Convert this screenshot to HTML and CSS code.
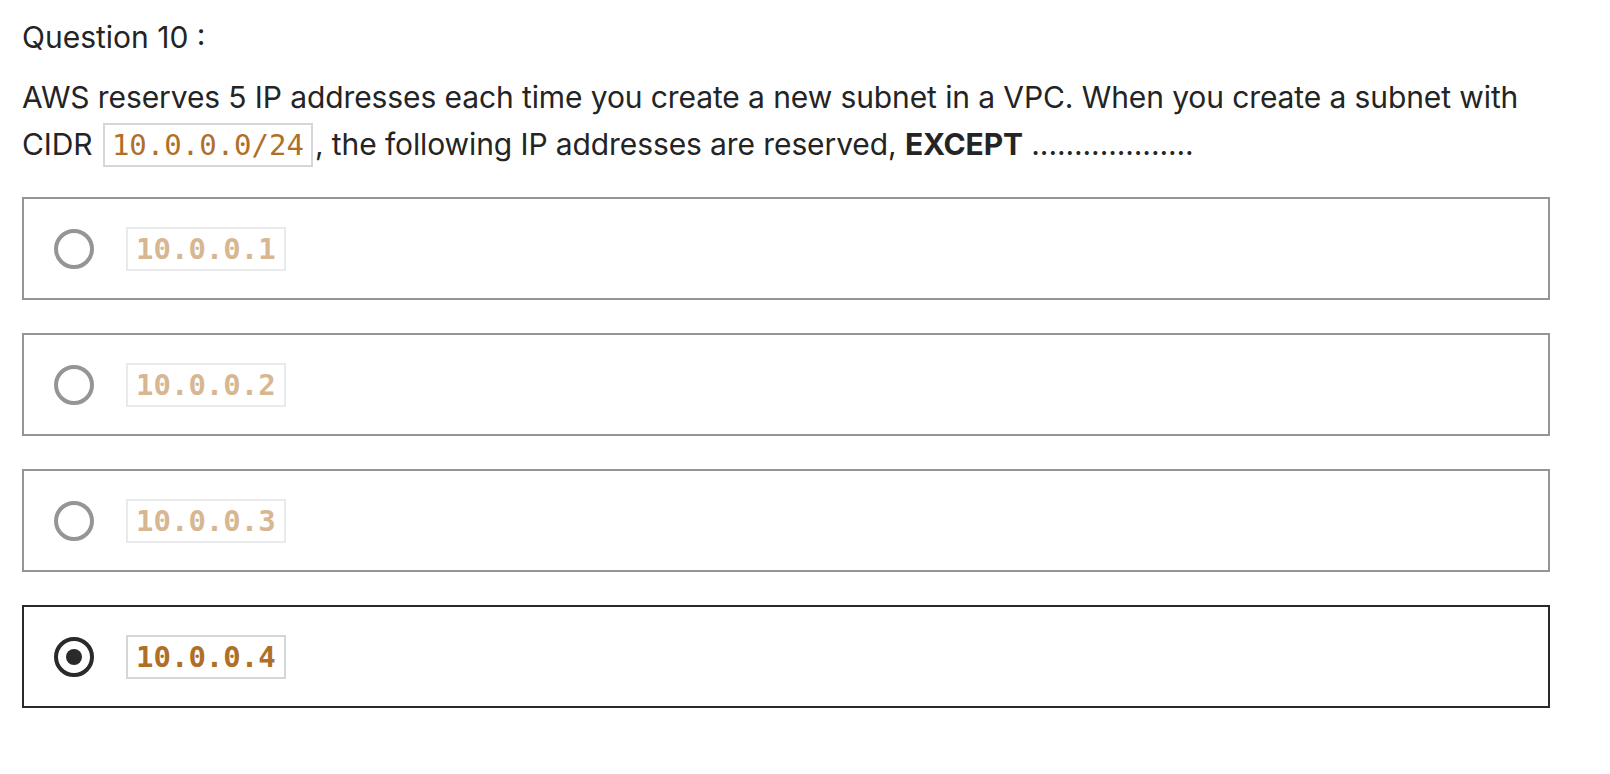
FILE: index.html
```html
<!DOCTYPE html>
<html>
<head>
<meta charset="utf-8">
<link rel="stylesheet" href="styles.css">
</head>
<body>
<main class="quiz">
  <h2 class="q-title">Question 10 :</h2>
  <p class="q-text">AWS reserves 5 IP addresses each time you create a new subnet in a VPC. When you create a subnet with CIDR <code class="code">10.0.0.0/24</code>, the following IP addresses are reserved, <strong>EXCEPT</strong> <span class="dots">...................</span></p>
  <div class="options">
    <label class="option">
      <span class="radio"></span>
      <code class="code opt-code">10.0.0.1</code>
    </label>
    <label class="option">
      <span class="radio"></span>
      <code class="code opt-code">10.0.0.2</code>
    </label>
    <label class="option">
      <span class="radio"></span>
      <code class="code opt-code">10.0.0.3</code>
    </label>
    <label class="option selected">
      <span class="radio"></span>
      <code class="code opt-code">10.0.0.4</code>
    </label>
  </div>
</main>
</body>
</html>
```
FILE: styles.css
```css
html, body {
  margin: 0;
  padding: 0;
  background: #ffffff;
}
body {
  font-family: Inter, "Liberation Sans", Arial, sans-serif;
  color: #242424;
}
.quiz {
  width: 1528px;
  padding: 14px 0 0 22px;
}
.q-title {
  margin: 0;
  font-size: 30px;
  font-weight: 400;
  line-height: 47px;
}
.q-text {
  margin: 13px 0 0 0;
  font-size: 30px;
  line-height: 47px;
  letter-spacing: -0.1px;
}
.q-text strong {
  font-weight: 700;
}
.code {
  font-family: "DejaVu Sans Mono", "Liberation Mono", monospace;
  font-size: 29px;
  color: #b06f27;
  border: 2px solid #d3d7db;
  padding: 0 7px;
  margin: 0 2px;
  line-height: 40px;
  display: inline-block;
  vertical-align: baseline;
  background: #ffffff;
  letter-spacing: 0;
}
.options {
  margin-top: 29px;
  display: flex;
  flex-direction: column;
  gap: 33px;
}
.option {
  display: flex;
  align-items: center;
  gap: 32px;
  border: 2px solid #959595;
  padding: 0 30px;
  height: 99px;
}
.option .code {
  margin: 0;
  padding: 0 8px;
}
.option.selected {
  border-color: #2a2a2a;
}
.radio {
  width: 40px;
  height: 40px;
  box-sizing: border-box;
  border-radius: 50%;
  border: 4px solid #959595;
  display: flex;
  align-items: center;
  justify-content: center;
  flex: none;
}
.option.selected .radio {
  border-color: #2a2a2a;
}
.option.selected .radio::after {
  content: "";
  width: 16px;
  height: 16px;
  border-radius: 50%;
  background: #2a2a2a;
}
.opt-code {
  font-weight: 700;
}
.option:not(.selected) .opt-code {
  opacity: 0.5;
}
```
